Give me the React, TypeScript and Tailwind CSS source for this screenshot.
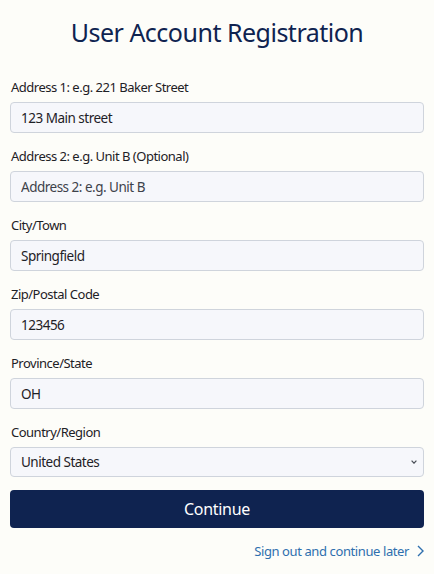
import React from "react";

const fields = [
  { label: "Address 1: e.g. 221 Baker Street", value: "123 Main street", placeholder: "" },
  { label: "Address 2: e.g. Unit B (Optional)", value: "", placeholder: "Address 2: e.g. Unit B" },
  { label: "City/Town", value: "Springfield", placeholder: "" },
  { label: "Zip/Postal Code", value: "123456", placeholder: "" },
  { label: "Province/State", value: "OH", placeholder: "" },
];

export default function App() {
  return (
    <div className="min-h-screen bg-[#fdfdf9] px-[10px] pt-[14px] font-['Noto_Sans',sans-serif] text-[#1e2126]">
      <h1 className="mb-[27px] text-center text-[25px] leading-[36px] tracking-[-0.5px] text-[#0f2350]">
        User Account Registration
      </h1>

      <form className="flex flex-col gap-[13px]" onSubmit={(e) => e.preventDefault()}>
        {fields.map((f) => (
          <div key={f.label} className="flex flex-col gap-[5px]">
            <label className="pl-px text-[13px] leading-[20px] tracking-[-0.5px]">{f.label}</label>
            <input
              defaultValue={f.value}
              placeholder={f.placeholder}
              className="h-[31px] rounded-[4px] border border-[#cfd4dc] bg-[#f6f7fb] px-[10px] text-[13.5px] tracking-[-0.5px] text-[#1e2126] outline-none placeholder:text-[#3d424a]"
            />
          </div>
        ))}

        <div className="flex flex-col gap-[5px]">
          <label className="pl-px text-[13px] leading-[20px] tracking-[-0.5px]">Country/Region</label>
          <div className="relative">
            <select className="h-[30px] w-full appearance-none rounded-[4px] border border-[#cfd4dc] bg-[#f6f7fb] px-[10px] text-[13.5px] tracking-[-0.5px] text-[#1e2126] outline-none">
              <option>United States</option>
              <option>Canada</option>
              <option>United Kingdom</option>
            </select>
            <svg
              className="pointer-events-none absolute right-[7px] top-[13px] h-[4px] w-[6px]"
              viewBox="0 0 6 4"
              fill="none"
              stroke="#4a4f57"
              strokeWidth="1.2"
            >
              <path d="M0.6 0.6l2.4 2.6 2.4-2.6" />
            </svg>
          </div>
        </div>

        <button
          type="submit"
          className="h-[38px] rounded-[4px] bg-[#0f2350] text-[16px] tracking-[-0.3px] text-white"
        >
          Continue
        </button>
      </form>

      <div className="mt-[13px] flex justify-end">
        <a href="#" className="flex items-center gap-[8px] text-[13px] leading-[20px] tracking-[-0.4px] text-[#2e6fae]">
          Sign out and continue later
          <svg className="h-[12px] w-[7px]" viewBox="0 0 7 12" fill="none" stroke="#2e6fae" strokeWidth="1.4">
            <path d="M1 1l5 5-5 5" />
          </svg>
        </a>
      </div>
    </div>
  );
}
